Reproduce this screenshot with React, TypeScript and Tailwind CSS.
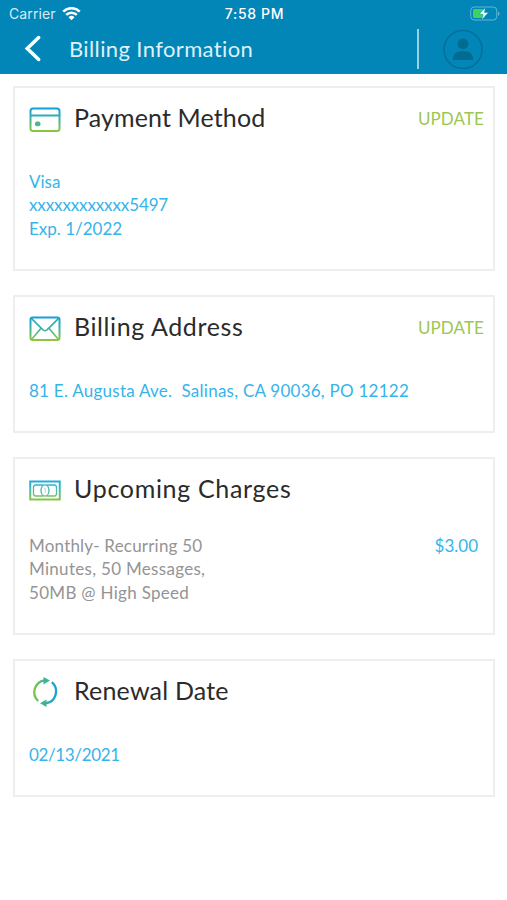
import type { ReactNode } from "react";

const GRADIENT = "url(#brand)";

function BrandGradient() {
  return (
    <defs>
      <linearGradient id="brand" gradientUnits="userSpaceOnUse" x1="0" y1="1" x2="0" y2="24">
        <stop offset="0" stopColor="#12a0dc" />
        <stop offset="0.5" stopColor="#3db5a4" />
        <stop offset="1" stopColor="#8cc63f" />
      </linearGradient>
    </defs>
  );
}

function CardIcon() {
  return (
    <svg width="32" height="26" viewBox="0 0 32 26" fill="none" stroke={GRADIENT} strokeWidth="2">
      <BrandGradient />
      <rect x="1.5" y="1.5" width="29" height="22.5" rx="2.5" />
      <path d="M1.5 8.5h29v.02" />
      <rect x="6" y="14.5" width="5.5" height="4.8" rx="2" fill="#4fb88a" stroke="none" />
    </svg>
  );
}

function EnvelopeIcon() {
  return (
    <svg width="32" height="26" viewBox="0 0 32 26" fill="none" stroke={GRADIENT} strokeWidth="1.7">
      <rect x="1.5" y="1.5" width="29" height="22.5" rx="2.2" strokeWidth="2" />
      <path d="M2.5 2.5 14 13.8q2 1.7 4 0L29.5 2.5M2.5 23.5 12 12.3M29.5 23.5 20 12.3" />
    </svg>
  );
}

function BanknoteIcon() {
  return (
    <svg width="32" height="26" viewBox="0 0 32 26" fill="none">
      <defs>
        <linearGradient id="note" gradientUnits="userSpaceOnUse" x1="0" y1="3" x2="0" y2="22">
          <stop stopColor="#22aadd" />
          <stop offset="0.5" stopColor="#4cbcb0" />
          <stop offset="1" stopColor="#8cc63f" />
        </linearGradient>
      </defs>
      <g stroke="url(#note)">
        <rect x="1.25" y="3.5" width="29.5" height="18" strokeWidth="2" />
        <path d="M14.5 7H6q0 1-1.500 1.200v8.600Q6 17 6 18h8.500M17.500 7H26q0 1 1.500 1.200v8.600Q26 17 26 18h-8.500" strokeWidth="1.3" />
        <ellipse cx="16" cy="12.5" rx="4" ry="5.600" strokeWidth="1.4" />
      </g>
      <path d="M15.200 10.300h1v4.500" stroke="#8ed3ce" strokeWidth="0.8" />
    </svg>
  );
}

function RenewIcon() {
  return (
    <svg width="32" height="32" viewBox="0 0 32 32" fill="none">
      <defs>
        <linearGradient id="renewLeft" gradientUnits="userSpaceOnUse" x1="3" y1="0" x2="17" y2="0">
          <stop stopColor="#8cc63f" />
          <stop offset="1" stopColor="#35b29b" />
        </linearGradient>
        <linearGradient id="renewRight" gradientUnits="userSpaceOnUse" x1="12" y1="0" x2="29" y2="0">
          <stop stopColor="#42b58b" />
          <stop offset="1" stopColor="#12a0dc" />
        </linearGradient>
      </defs>
      <path d="M9.2 24A12 12 0 0 1 15.500 3.300" stroke="url(#renewLeft)" strokeWidth="2.3" />
      <path d="M22.8 5.200A12 12 0 0 1 16.500 26.300" stroke="url(#renewRight)" strokeWidth="2.3" />
      <path d="m14.500 0 6.500 3.600-6.500 3.800z" fill="#3fb392" />
      <path d="m17.500 22.500-6.500 3.700 6.500 3.800z" fill="#3fb392" />
    </svg>
  );
}

function StatusBar() {
  return (
    <div className="grid h-7 grid-cols-3 items-center pl-[9px] pr-[7px] font-['Inter',sans-serif] text-[14px] leading-4">
      <div className="flex items-center gap-[6px]">
        <span className="tracking-[0.1px] text-[#d5ecf7]">Carrier</span>
        <svg width="19" height="14" viewBox="0 0 19 14" fill="none" stroke="white" strokeWidth="2.5">
          <path d="M1.2 4.600a11.7 11.7 0 0 1 16.6 0M4.2 7.900a7.5 7.5 0 0 1 10.6 0" />
          <path d="M9.5 13.200 6.5 10.200a4.3 4.3 0 0 1 6 0z" fill="white" stroke="none" />
        </svg>
      </div>
      <span className="text-center font-medium tracking-[0.65px]">7:58 PM</span>
      <svg className="justify-self-end" width="30" height="16" viewBox="0 0 30 16" fill="none">
        <rect x="0.75" y="1" width="26" height="13" rx="3.5" stroke="#66b5d6" />
        <rect x="3" y="3" width="12" height="9" rx="1.5" fill="#3ed35c" />
        <path d="M28 5.5v4.5q1.5-.7 1.5-2.25T28 5.5z" fill="#66b5d6" />
        <path d="M15.5 1.5 9.2 8.2h4l-1.500 5.5 6.8-7.200h-4.200z" fill="white" stroke="#0286b8" strokeWidth="0.5" />
      </svg>
    </div>
  );
}

function Header() {
  return (
    <header className="h-[74px] bg-[#0286b8] text-white">
      <StatusBar />
      <div className="flex h-[42px] items-center px-6">
        <svg width="18" height="28" viewBox="0 0 18 28" fill="none" stroke="white" strokeWidth="3.5" strokeLinecap="round">
          <path d="M14.7 2.5 3.2 13.5l11.5 11" />
        </svg>
        <h1 className="ml-[27px] text-[22px] leading-7 tracking-[0.38px] text-[#dff1f9]">Billing Information</h1>
        <div className="ml-auto h-10 w-[2px] bg-[#9bd0e5]" />
        <svg className="ml-6" width="40" height="40" viewBox="0 0 40 40">
          <circle cx="20" cy="20.5" r="19" fill="none" stroke="#036f9b" strokeWidth="1.5" />
          <circle cx="20" cy="14.8" r="5.4" fill="#036b91" />
          <path d="M9.7 31q.5-8.5 7.800-8.8h5q7.300.3 7.800 8.8z" fill="#036b91" />
        </svg>
      </div>
    </header>
  );
}

type CardProps = {
  icon: ReactNode;
  title: string;
  titleClass: string;
  className: string;
  action?: boolean;
  children: ReactNode;
};

function Card({ icon, title, titleClass, className, action, children }: CardProps) {
  return (
    <section className={`flex flex-col border-2 border-[#eeeeee] pl-[14px] pr-[9px] pt-[14px] ${className}`}>
      <div className="flex h-9 items-center">
        <span className="flex w-[45px] items-center">{icon}</span>
        <h2 className={`pb-[6px] text-[25px] leading-[30px] text-[#2b2b2b] ${titleClass}`}>{title}</h2>
        {action && (
          <button className="ml-auto pb-[2px] text-[17px] leading-6 tracking-[0.1px] text-[#9bc751]">UPDATE</button>
        )}
      </div>
      <div className="text-[17px] leading-[23.4px] text-[#35b4ea]">{children}</div>
    </section>
  );
}

export default function App() {
  return (
    <div className="min-h-[900px] w-[507px] bg-white font-['Lato',sans-serif]">
      <Header />
      <main className="flex flex-col gap-6 pl-[13px] pr-3 pt-3">
        <Card icon={<CardIcon />} title="Payment Method" titleClass="tracking-[0.13px]" className="h-[185px] gap-8" action>
          <p>Visa</p>
          <p className="tracking-[-0.12px]">xxxxxxxxxxxx5497</p>
          <p>Exp. 1/2022</p>
        </Card>
        <Card icon={<EnvelopeIcon />} title="Billing Address" titleClass="tracking-[0.6px]" className="h-[138px] gap-8" action>
          <p className="whitespace-pre tracking-[0.25px]">{"81 E. Augusta Ave.  Salinas, CA 90036, PO 12122"}</p>
        </Card>
        <Card icon={<BanknoteIcon />} title="Upcoming Charges" titleClass="tracking-[0.68px]" className="h-[178px] gap-[25px]">
          <div className="flex justify-between pr-[6px]">
            <div className="text-[#949494]">
              <p className="tracking-[0.2px]">Monthly- Recurring 50</p>
              <p className="tracking-[0.3px]">Minutes, 50 Messages,</p>
              <p className="tracking-[0.3px]">50MB @ High Speed</p>
            </div>
            <span>$3.00</span>
          </div>
        </Card>
        <Card icon={<RenewIcon />} title="Renewal Date" titleClass="tracking-[0.2px]" className="h-[138px] gap-8">
          <p className="tracking-[-0.35px]">02/13/2021</p>
        </Card>
      </main>
    </div>
  );
}
